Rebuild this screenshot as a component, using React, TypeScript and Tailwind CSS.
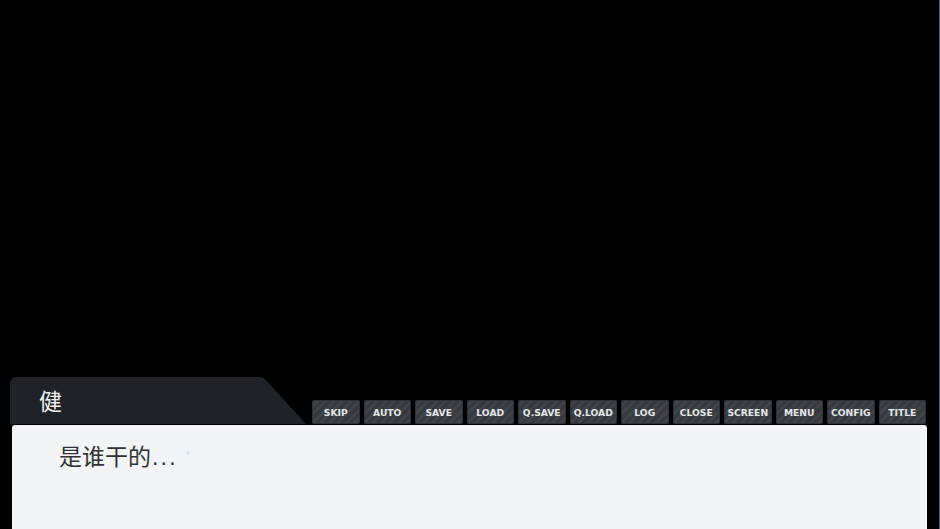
const buttons = ["SKIP", "AUTO", "SAVE", "LOAD", "Q.SAVE", "Q.LOAD", "LOG", "CLOSE", "SCREEN", "MENU", "CONFIG", "TITLE"];

export default function App() {
  return (
    <div className="relative flex h-[529px] w-[940px] flex-col justify-end overflow-hidden bg-black font-['Liberation_Sans','Noto_Sans_CJK_SC',sans-serif]">
      <div className="flex h-[48px] items-start pl-[10px] pr-[14px]">
        <div className="flex h-[47px] w-[296px] items-center rounded-tl-[6px] bg-[#1f2328] pl-[29px] pt-[3px] text-[23px] leading-none text-[#f2f3f4] [clip-path:polygon(0_0,251px_0,255px_2px,296px_47px,0_47px)]">
          健
        </div>
        <div className="ml-[6px] mt-[23px] flex h-[24px] flex-1 justify-between">
          {buttons.map((label) => (
            <div
              key={label}
              className="flex h-[24px] w-[47.5px] items-center justify-center rounded-[2px] bg-[#3a3e44] bg-[repeating-linear-gradient(135deg,#363a3f_0px,#363a3f_3px,#404449_3px,#404449_6px)] pt-[2px] font-['DejaVu_Sans',sans-serif] text-[9.2px] font-bold leading-none text-[#e4e6e8] shadow-[inset_0_0_0_1px_#2d3035]"
            >
              {label}
            </div>
          ))}
        </div>
      </div>
      <div className="ml-[12px] mr-[13px] h-[104px] rounded-t-[3px] bg-[#f2f4f6] pl-[47px] pt-[17px]">
        <p className="flex items-center text-[23px] leading-[30px] text-[#303234]">
          <span>是谁干的</span>
          <span className="ml-[1px] tracking-[2.2px]">...</span>
          <span className="mb-[8px] ml-[8px] h-[4px] w-[4px] rounded-full bg-[#cfe6f2]" />
        </p>
      </div>
      <div className="absolute right-0 top-0 h-full w-[1px] bg-[#3f5a8e]" />
    </div>
  );
}
